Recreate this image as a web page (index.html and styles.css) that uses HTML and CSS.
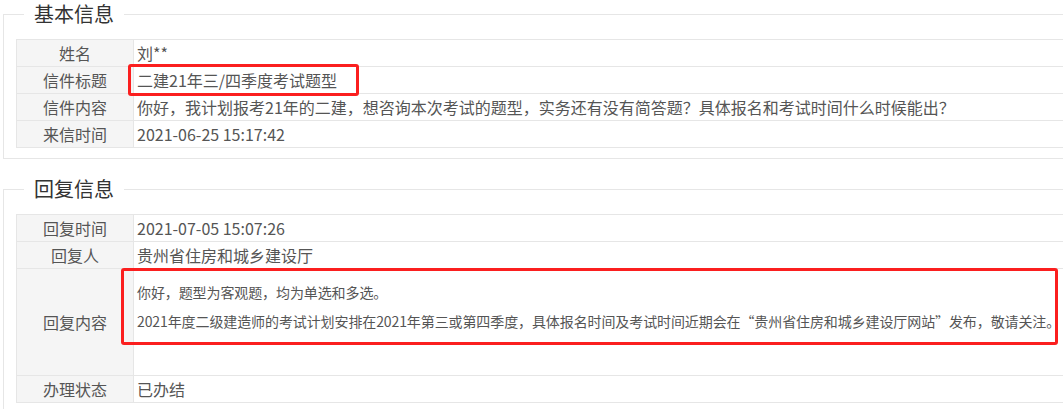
FILE: index.html
```html
<!DOCTYPE html>
<html lang="zh-CN">
<head>
    <meta charset="UTF-8">
    <meta name="viewport" content="width=device-width, initial-scale=1.0">
    <title>信件详情</title>
    <link rel="stylesheet" href="styles.css">
</head>
<body>

    <!-- 基本信息 -->
    <fieldset class="info-box">
        <legend>基本信息</legend>
        <table class="info-table">
            <tr><td class="label">姓名</td><td class="value">刘**</td></tr>
            <tr><td class="label">信件标题</td><td class="value"><span class="mark-title">二建21年三/四季度考试题型</span></td></tr>
            <tr><td class="label">信件内容</td><td class="value">你好，我计划报考21年的二建，想咨询本次考试的题型，实务还有没有简答题？具体报名和考试时间什么时候能出？</td></tr>
            <tr><td class="label">来信时间</td><td class="value">2021-06-25 15:17:42</td></tr>
        </table>
    </fieldset>

    <!-- 回复信息 -->
    <fieldset class="info-box">
        <legend>回复信息</legend>
        <table class="info-table">
            <tr><td class="label">回复时间</td><td class="value">2021-07-05 15:07:26</td></tr>
            <tr><td class="label">回复人</td><td class="value">贵州省住房和城乡建设厅</td></tr>
            <tr>
                <td class="label">回复内容</td>
                <td class="value reply-cell">
                    <div class="reply-text">
                        <p>你好，题型为客观题，均为单选和多选。</p>
                        <p>2021年度二级建造师的考试计划安排在2021年第三或第四季度，具体报名时间及考试时间近期会在“贵州省住房和城乡建设厅网站”发布，敬请关注。</p>
                    </div>
                </td>
            </tr>
            <tr><td class="label">办理状态</td><td class="value">已办结</td></tr>
        </table>
    </fieldset>

</body>
</html>
```

FILE: styles.css
```css
html, body { overflow: hidden; }
body {
    margin: 0; background: #fff; color: #555;
    font-family: "Noto Sans CJK SC", "Microsoft YaHei", sans-serif; font-size: 16px;
}

.info-box {
    width: 1120px; margin: 0 0 16px 3px; padding: 11px 12px 10px;
    border: 1px solid #e6e6e6; box-sizing: border-box;
}
.info-box legend {
    margin-left: 8px; padding: 0 10px;
    font-size: 20px; line-height: 28px; color: #333;
}

.info-table { width: 100%; border-collapse: collapse; }
.info-table td {
    border: 1px solid #e6e6e6; padding: 0 3px;
    height: 26px; line-height: 26px; white-space: nowrap;
}
.info-table .label {
    width: 110px; text-align: center; background: #f5f5f5; color: #555;
}
.info-table .value { color: #555; }

/* red marks */
.mark-title { position: relative; display: inline-block; }
.mark-title::after {
    content: ""; position: absolute; left: -9px; top: -3px;
    width: 231px; height: 32px; box-sizing: border-box;
    border: 3px solid #fb1f1f; border-radius: 3px;
}

.info-table .reply-cell { vertical-align: top; padding-top: 13px; height: auto; }
.reply-text { position: relative; height: 93px; }
.reply-text p { margin: 0 0 9px; font-size: 14px; line-height: 20px; letter-spacing: -0.1px; }
.reply-text::after {
    content: ""; position: absolute; left: -16px; top: -14px;
    width: 937px; height: 77px; box-sizing: border-box;
    border: 3px solid #fb1f1f; border-radius: 3px;
}
```
